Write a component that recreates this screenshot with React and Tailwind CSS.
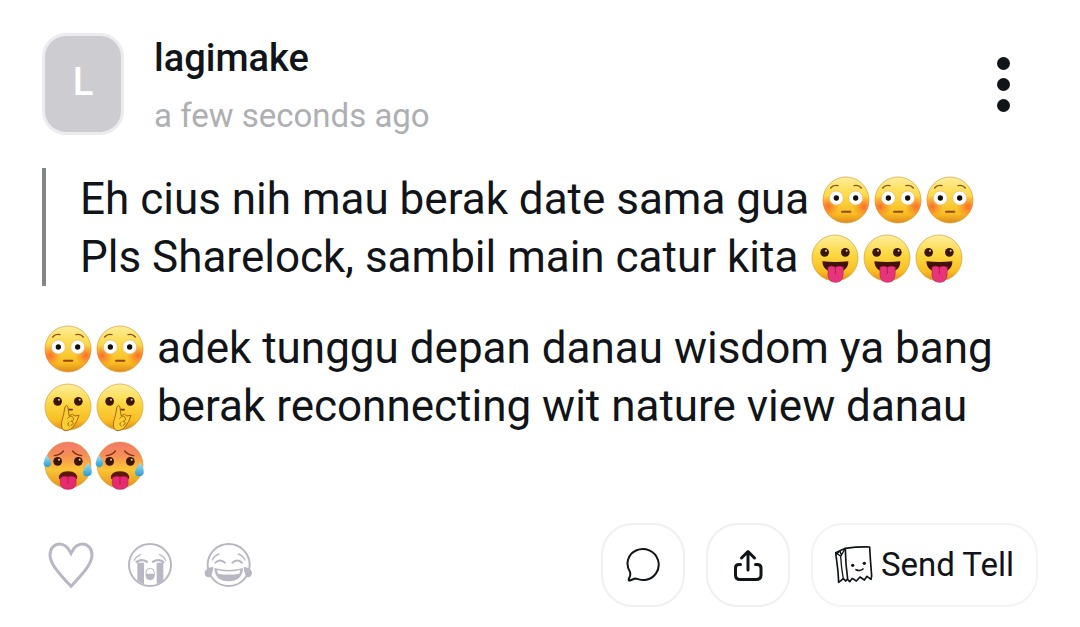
import React from 'react';

const quoteLines = [
    { text: 'Eh cius nih mau berak date sama gua', emoji: 'flushed', count: 3 },
    { text: 'Pls Sharelock, sambil main catur kita', emoji: 'tongue', count: 3 },
];

// Shared gradients for the emoji faces
function EmojiDefs() {
    return (
        <svg className="absolute h-0 w-0" aria-hidden="true">
            <defs>
                <linearGradient id="skin" x1="0" y1="0" x2="0" y2="1">
                    <stop offset="0" stopColor="#fdee9c" />
                    <stop offset="0.4" stopColor="#fcd945" />
                    <stop offset="0.8" stopColor="#f9bd22" />
                    <stop offset="1" stopColor="#dd8a1c" />
                </linearGradient>
                <linearGradient id="hotSkin" x1="0" y1="0" x2="0" y2="1">
                    <stop offset="0" stopColor="#f2796b" />
                    <stop offset="0.3" stopColor="#f68f58" />
                    <stop offset="0.6" stopColor="#fac535" />
                    <stop offset="1" stopColor="#e2921c" />
                </linearGradient>
                <radialGradient id="blush">
                    <stop offset="0" stopColor="#f9632a" stopOpacity="0.9" />
                    <stop offset="1" stopColor="#f9782a" stopOpacity="0" />
                </radialGradient>
                <linearGradient id="drop" x1="0" y1="0" x2="0" y2="1">
                    <stop offset="0" stopColor="#a5e2f5" />
                    <stop offset="1" stopColor="#279bd0" />
                </linearGradient>
                <clipPath id="face">
                    <circle cx="78" cy="78" r="70" />
                </clipPath>
            </defs>
        </svg>
    );
}

function DarkEyes({ y }) {
    return (
        <>
            <circle cx="47" cy={y} r="13" fill="#3a1508" />
            <circle cx="109" cy={y} r="13" fill="#3a1508" />
            <circle cx="51" cy={y - 5} r="3" fill="#e8cdb0" />
            <circle cx="113" cy={y - 5} r="3" fill="#e8cdb0" />
        </>
    );
}

const faces = {
    flushed: {
        label: '😳',
        skin: 'url(#skin)',
        art: (
            <>
                <g clipPath="url(#face)">
                    <circle cx="24" cy="98" r="34" fill="url(#blush)" />
                    <circle cx="132" cy="98" r="34" fill="url(#blush)" />
                </g>
                <path d="M32 42Q40 32 54 35M102 35Q116 32 124 42" fill="none" stroke="#87521b" strokeWidth="4" strokeLinecap="round" />
                <circle cx="49" cy="72" r="21" fill="#fff" stroke="#e7b66c" strokeWidth="2" />
                <circle cx="107" cy="72" r="21" fill="#fff" stroke="#e7b66c" strokeWidth="2" />
                <circle cx="49" cy="72" r="8" fill="#15100e" />
                <circle cx="107" cy="72" r="8" fill="#15100e" />
                <path d="M66 113H91" stroke="#8f4b12" strokeWidth="6" strokeLinecap="round" />
            </>
        ),
    },
    tongue: {
        label: '😛',
        skin: 'url(#skin)',
        art: (
            <>
                <DarkEyes y={61} />
                <path d="M40 88Q79 92 118 88Q118 120 79 121Q42 120 40 88Z" fill="#421208" />
                <path d="M57 106Q67 99 79 106Q92 99 103 106L102 130Q100 151 80 151Q59 151 57 130Z" fill="#e6357a" stroke="#c31b57" strokeWidth="2" />
                <path d="M79 107V125" stroke="#b81752" strokeWidth="3" strokeLinecap="round" />
            </>
        ),
    },
    shush: {
        label: '🤫',
        skin: 'url(#skin)',
        art: (
            <>
                <DarkEyes y={61} />
                <path d="M68 86H90" stroke="#6b3410" strokeWidth="5" strokeLinecap="round" />
                <path
                    d="M69 78Q74 68 78 79L81 104L91 100L99 105L111 103Q107 119 97 132Q87 149 69 149Q55 145 59 122Q65 103 69 78Z"
                    fill="#f8ce32"
                    stroke="#a96812"
                    strokeWidth="3"
                    strokeLinejoin="round"
                />
                <path d="M77 112Q86 101 93 109Q99 119 87 121M90 121Q100 127 87 133M81 124Q73 129 82 136" fill="none" stroke="#a96812" strokeWidth="3" strokeLinecap="round" />
            </>
        ),
    },
    hot: {
        label: '🥵',
        skin: 'url(#hotSkin)',
        art: (
            <>
                <path d="M37 50Q55 48 64 36M92 36Q102 48 119 50" fill="none" stroke="#82301a" strokeWidth="4" strokeLinecap="round" />
                <DarkEyes y={67} />
                <path d="M51 120Q48 97 78 97Q108 97 105 120Z" fill="#5d180b" />
                <path d="M55 116Q66 108 78 114Q90 108 102 116V133Q101 151 78 151Q56 151 55 133Z" fill="#e52c70" stroke="#bd174d" strokeWidth="2" />
                <path d="M78 115V134" stroke="#b5174d" strokeWidth="3" strokeLinecap="round" />
                <path d="M13 49Q28 63 27 74Q25 84 14 84Q5 83 5 73Q7 60 13 49Z" fill="url(#drop)" />
                <path d="M139 71Q152 92 149 103Q146 113 134 112Q122 110 123 98Q126 86 139 71Z" fill="url(#drop)" />
            </>
        ),
    },
};

function Emoji({ name }) {
    const face = faces[name];
    return (
        <svg viewBox="0 0 156 156" role="img" aria-label={face.label} className="inline-block size-[52px] align-[-12px]">
            <circle cx="78" cy="78" r="69" fill={face.skin} stroke="#d49a35" strokeWidth="2" />
            {face.art}
        </svg>
    );
}

function EmojiRun({ name, count }) {
    return (
        <span className="whitespace-nowrap">
            {Array.from({ length: count }, (_, i) => (
                <Emoji key={i} name={name} />
            ))}
        </span>
    );
}

function HeartIcon() {
    return (
        <svg viewBox="0 0 144 144" className="size-12" fill="none" stroke="#b9b7c3" strokeWidth="9" strokeLinejoin="miter">
            <path d="M75 37C66 18 56 9 41 9C23 9 12 24 12 42C12 66 33 91 75 136C117 91 138 66 138 42C138 24 127 9 109 9C94 9 84 18 75 37Z" />
        </svg>
    );
}

function CryIcon() {
    return (
        <svg viewBox="0 0 144 144" className="size-12" fill="none" stroke="#b9b7c3" strokeWidth="6">
            <circle cx="75" cy="72" r="63" />
            <path d="M28 58Q34 45 47 41M122 58Q116 45 103 41" strokeWidth="4" strokeLinecap="round" />
            <path d="M37 65H57V131L37 119ZM95 65H115V119L95 131Z" fill="#b9b7c3" stroke="none" />
            <path d="M35 63Q49 52 66 62M84 62Q101 52 115 63" strokeWidth="7" strokeLinecap="round" />
            <rect x="63" y="82" width="25" height="34" rx="12" strokeWidth="3" />
            <path d="M63 98H88V104Q86 116 75 116Q64 116 63 104Z" fill="#b9b7c3" stroke="none" />
        </svg>
    );
}

function LaughIcon() {
    return (
        <svg viewBox="0 0 144 144" className="size-12" fill="none" stroke="#b9b7c3" strokeWidth="6">
            <circle cx="74" cy="72" r="63" />
            <path d="M25 57Q31 44 45 39M123 57Q117 44 103 39" strokeWidth="4" strokeLinecap="round" />
            <path d="M34 65Q47 52 63 65M85 65Q100 52 114 65" strokeWidth="6" strokeLinecap="round" />
            <path d="M33 84Q74 94 115 84Q112 119 74 119Q36 119 33 84Z" fill="#b9b7c3" strokeWidth="4" />
            <path d="M39 87Q74 96 109 87L106 98Q74 103 42 98Z" fill="#fff" stroke="none" />
            <path d="M28 77Q6 80 2 93Q1 108 13 109Q26 108 28 77ZM119 77Q140 80 144 93Q144 108 134 109Q121 108 119 77Z" fill="#b9b7c3" stroke="none" />
        </svg>
    );
}

function CommentIcon() {
    return (
        <svg viewBox="0 0 36 36" className="size-9" fill="none" stroke="#111418" strokeWidth="2" strokeLinejoin="round">
            <path d="M5 25C0 17 3 7 11 3.500C20-.5 30 4 33 13C36 23 29 32 20 33C16 33.500 13 32 10 31.500L5 33.500C3.500 34 3.500 32.500 4 31.500C5 29 6 28 5 25Z" />
        </svg>
    );
}

function ShareIcon() {
    return (
        <svg viewBox="0 0 36 36" className="size-9" fill="none" stroke="#111418" strokeWidth="3" strokeLinecap="round" strokeLinejoin="round">
            <path d="M18 23V5M11.500 11L18 4.500L24.500 11" />
            <path d="M10.500 17.500H9C6.500 17.500 5.500 19 5.500 21V28C5.500 31 7 32.500 10 32.500H26C29 32.500 31 31 31 28V21C31 19 29.500 17.500 27 17.500H25.500" />
        </svg>
    );
}

// Paper bag with a little face
function TellIcon() {
    return (
        <svg viewBox="0 0 114 114" className="size-[38px]" fill="none" stroke="#111418" strokeWidth="5" strokeLinejoin="round" strokeLinecap="round">
            <path d="M31 7Q68 2 104 3L106 38L110 90L108 100L96 91L88 102L75 93L64 105L52 97L44 107L37 99L32 105L25 98L11 109L9 76L2 20L31 7L33 54L38 99" />
            <path d="M3 20L17 31L29 10M17 31L20 66L25 99M5 24L15 15L19 27" strokeWidth="4" />
            <circle cx="53" cy="58" r="5" fill="#111418" stroke="none" />
            <circle cx="88" cy="52" r="5" fill="#111418" stroke="none" />
            <path d="M63 71Q75 77 84 69" />
        </svg>
    );
}

const reactions = [
    { label: 'Love', Icon: HeartIcon },
    { label: 'Cry', Icon: CryIcon },
    { label: 'Laugh', Icon: LaughIcon },
];

export default function App() {
    return (
        <main className="min-h-screen bg-white px-[42px] pt-[33px] pb-5 font-['Roboto',sans-serif] text-[#111418]">
            <EmojiDefs />
            <article>
                {/* Author */}
                <header className="flex items-start">
                    <div className="flex h-[102px] w-[82px] shrink-0 items-center justify-center rounded-[24px] border-3 border-[#ececf0] bg-[#cdccd1] pb-1 text-[38px] font-medium text-white">
                        L
                    </div>
                    <div className="ml-[30px] flex-1">
                        <h1 className="text-[38px] leading-[50px] font-medium">lagimake</h1>
                        <p className="mt-2 text-[33px] leading-[50px] text-[#aeafb2]">
                            <time>a few seconds ago</time>
                        </p>
                    </div>
                    <button type="button" aria-label="More options" className="mt-5 mr-[25px] flex w-5 flex-col items-center gap-2 py-1">
                        <span className="size-[13px] rounded-full bg-[#111418]" />
                        <span className="size-[13px] rounded-full bg-[#111418]" />
                        <span className="size-[13px] rounded-full bg-[#111418]" />
                    </button>
                </header>

                {/* Question being answered */}
                <blockquote className="mt-[27px] border-l-4 border-[#84878a] pt-[2px] pl-[34px] text-[44px] leading-[58px]">
                    {quoteLines.map((line) => (
                        <p key={line.emoji}>
                            {line.text} <EmojiRun name={line.emoji} count={line.count} />
                        </p>
                    ))}
                </blockquote>

                {/* Answer */}
                <p className="mt-[33px] text-[44px] leading-[58px]">
                    <EmojiRun name="flushed" count={2} /> adek tunggu depan danau wisdom ya bang{' '}
                    <EmojiRun name="shush" count={2} /> berak reconnecting wit nature view danau{' '}
                    <EmojiRun name="hot" count={2} />
                </p>

                {/* Actions */}
                <footer className="mt-[30px] flex items-center justify-between">
                    <div className="ml-1 flex items-center gap-[31px]">
                        {reactions.map(({ label, Icon }) => (
                            <button key={label} type="button" aria-label={label}>
                                <Icon />
                            </button>
                        ))}
                    </div>
                    <div className="flex items-center gap-[21px]">
                        <button type="button" aria-label="Comment" className="flex size-[84px] items-center justify-center rounded-[32px] border-2 border-[#f0f0f4]">
                            <CommentIcon />
                        </button>
                        <button type="button" aria-label="Share" className="flex size-[84px] items-center justify-center rounded-[32px] border-2 border-[#f0f0f4]">
                            <ShareIcon />
                        </button>
                        <button type="button" className="flex h-[84px] items-center gap-2 rounded-[32px] border-2 border-[#f3f3f5] px-[22px] text-[33px]">
                            <TellIcon />
                            Send Tell
                        </button>
                    </div>
                </footer>
            </article>
        </main>
    );
}
